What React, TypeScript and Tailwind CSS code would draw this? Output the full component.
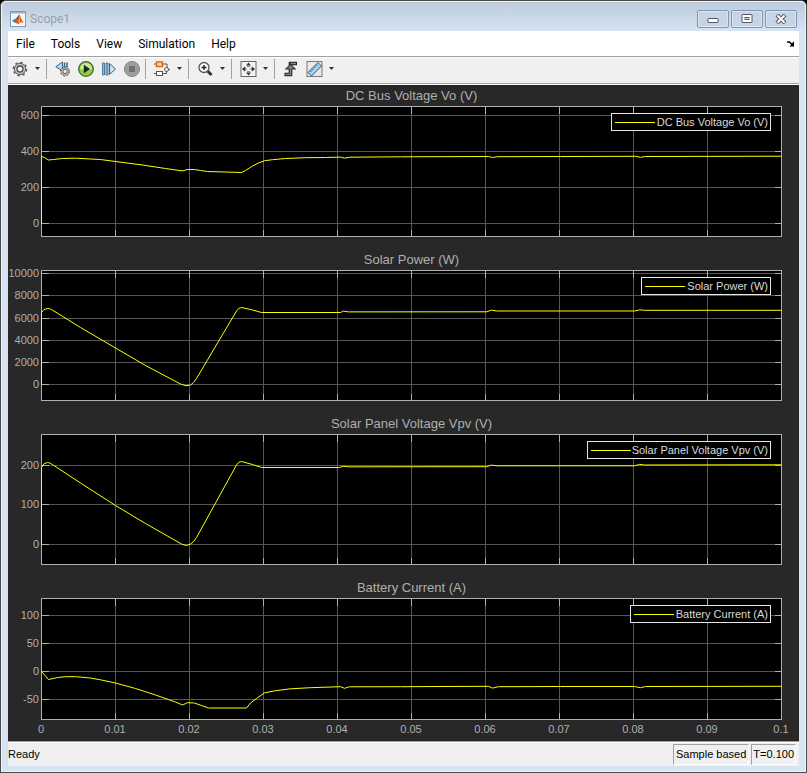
import type { ReactNode } from "react";

type Tick = { label: string; y: number };

type PlotData = {
  title: string;
  top: number;
  bottom: number;
  ticks: Tick[];
  legendX: number;
  path: string;
};

const X_LABELS = ["0", "0.01", "0.02", "0.03", "0.04", "0.05", "0.06", "0.07", "0.08", "0.09", "0.1"];

const LEFT = 41;
const STEP = 74;
const RIGHT = LEFT + STEP * 10;

const plots: PlotData[] = [
  {
    title: "DC Bus Voltage Vo (V)",
    top: 106,
    bottom: 236,
    legendX: 611,
    ticks: [
      { label: "600", y: 115 },
      { label: "400", y: 151 },
      { label: "200", y: 187 },
      { label: "0", y: 223 },
    ],
    path: "M41 223 V156 L44 157 L48 159.5 L53 159 L62 158 L75 157.7 L90 158.5 L100 159 L115 161 L142 164.5 L165 168 L182 170.4 L187 169 L194 169 L200 170 L207 171 L225 171.5 L241 172 L245 170 L252 165.5 L258 162.5 L264 160.2 L272 159.2 L285 158 L305 157.2 L325 157 L340 156.6 L344 157.6 L349 156.7 L400 156.3 L488 156 L492 157 L497 156.2 L560 156 L635 155.8 L640 156.8 L645 156 L781 155.7",
  },
  {
    title: "Solar Power (W)",
    top: 270,
    bottom: 400,
    legendX: 641,
    ticks: [
      { label: "10000", y: 273 },
      { label: "8000", y: 295 },
      { label: "6000", y: 318 },
      { label: "4000", y: 340 },
      { label: "2000", y: 362 },
      { label: "0", y: 384 },
    ],
    path: "M41 384 V312 Q43 308 47 308 Q49 308 51 309 L80 327 L115 347.5 L145 365 L180 383.5 Q186 386.5 190 384.5 Q193 383 196 378 L236 310.5 Q238 307 241 307 L252 309.5 L261 312 L340 312 L343 310.6 L348 311.4 L486 311.3 L491 309.7 L496 310.5 L634 310.5 L639 309.3 L644 309.8 L781 309.8",
  },
  {
    title: "Solar Panel Voltage Vpv (V)",
    top: 434,
    bottom: 564,
    legendX: 587,
    ticks: [
      { label: "200", y: 465 },
      { label: "100", y: 504 },
      { label: "0", y: 544 },
    ],
    path: "M41 544 V467 Q43 462 47 462 Q49 462 51 463.5 L80 482.5 L115 505 L145 523 L181 543.5 Q186 546.5 190 543.5 Q193 542 196 537 L236 464.5 Q238 461 241 461 L252 464 L261 467 L339 467 L343 465.7 L348 466.3 L486 466.2 L491 464.6 L496 465.3 L634 465.3 L639 463.9 L644 464.5 L781 464.3",
  },
  {
    title: "Battery Current (A)",
    top: 598,
    bottom: 719,
    legendX: 630,
    ticks: [
      { label: "100", y: 615 },
      { label: "50", y: 643 },
      { label: "0", y: 671 },
      { label: "-50", y: 699 },
    ],
    path: "M41 671 L48 679 L57 677 L65 676.2 L75 676.2 L90 677.5 L100 679.3 L115 682.5 L135 688 L155 694.5 L175 701.5 L182 704.5 L187 702.2 L194 702.5 L201 705 L208 707.5 L246 707.5 L250 702.5 L256 698 L264 692.4 L275 690.2 L290 688.3 L310 687.2 L340 686.2 L344 687.8 L349 686.3 L400 686.2 L488 685.8 L492 687.6 L498 686.2 L560 686 L634 686 L640 687.2 L645 686 L781 685.8",
  },
];

function Plot({ plot, showTime }: { plot: PlotData; showTime: boolean }) {
  const { title, top, bottom, ticks, legendX, path } = plot;
  const columns = X_LABELS.map((_, i) => LEFT + STEP * i);

  return (
    <section>
      <h2 className="h-[21px] pl-4 text-center text-[13px] leading-[22px] text-[#afafaf]">{title}</h2>
      <svg viewBox={`8 ${top} 791 143`} className="block w-full overflow-visible" role="img" aria-label={title}>
        <rect x={LEFT} y={top} width={RIGHT - LEFT} height={bottom - top} fill="#000" />
        <g shapeRendering="crispEdges" strokeWidth="1" fill="none" transform="translate(0.5 0.5)">
          <g stroke="#575757">
            {ticks.map((t) => (
              <path key={t.y} d={`M${LEFT} ${t.y}H${RIGHT}`} />
            ))}
            {columns.slice(1, -1).map((x) => (
              <path key={x} d={`M${x} ${top}V${bottom}`} />
            ))}
          </g>
          <g stroke="#afafaf">
            {ticks.map((t) => (
              <path key={t.y} d={`M${LEFT} ${t.y}h7M${RIGHT} ${t.y}h-7`} />
            ))}
            {columns.map((x) => (
              <path key={x} d={`M${x} ${top}v7M${x} ${bottom}v-7`} />
            ))}
            <rect x={LEFT} y={top} width={RIGHT - LEFT} height={bottom - top} />
          </g>
        </g>
        <path d={path} fill="none" stroke="#ffff00" strokeWidth="1" transform="translate(0.5 0.5)" />
        <g fontSize="11" fill="#afafaf">
          {ticks.map((t) => (
            <text key={t.y} x="39" y={t.y + 4} textAnchor="end">
              {t.label}
            </text>
          ))}
          {showTime &&
            X_LABELS.map((label, i) => (
              <text key={label} x={LEFT + STEP * i} y="733" textAnchor="middle">
                {label}
              </text>
            ))}
        </g>
        <rect x={legendX + 0.5} y={top + 7.5} width={770 - legendX} height="17" fill="#000" stroke="#e6e6e6" />
        <path d={`M${legendX + 4} ${top + 16.5}h40`} stroke="#ffff00" />
        <text x="768" y={top + 20} textAnchor="end" fontSize="11" fill="#d9d9d9">
          {title}
        </text>
      </svg>
    </section>
  );
}

function ToolButton({ label, children }: { label: string; children: ReactNode }) {
  return (
    <button type="button" aria-label={label} className="size-4 shrink-0">
      <svg viewBox="0 0 16 16" className="block size-4 overflow-visible" fill="none">
        {children}
      </svg>
    </button>
  );
}

function Caret({ label }: { label: string }) {
  return (
    <button type="button" aria-label={label} className="-ml-0.5 flex h-4 w-2 shrink-0 items-center justify-center">
      <svg viewBox="0 0 5 3" className="block h-[3px] w-[5px]">
        <path d="M0 0h5L2.5 3z" fill="#333" />
      </svg>
    </button>
  );
}

function Separator() {
  return <div className="mr-px -ml-0.5 h-5 w-px shrink-0 bg-[#a0a0a0]" />;
}

function Gear({ x, y, scale }: { x: number; y: number; scale: number }) {
  return (
    <g transform={`translate(${x} ${y}) scale(${scale})`}>
      <circle r="6.6" stroke="#5c5c5c" strokeWidth="1.4" strokeDasharray="2.6 2.58" />
      <circle r="5.6" fill="#c9c9c9" stroke="#5c5c5c" strokeWidth="1" />
      <circle r="3" fill="#f5f5f5" stroke="#4a4a4a" strokeWidth="1.3" />
    </g>
  );
}

function Toolbar() {
  return (
    <div className="flex h-[27px] items-center gap-[7px] border-y border-t-white border-b-[#a0a0a0] bg-[#f0f0f0] pr-2 pb-1 pl-1">
      <ToolButton label="Configuration properties">
        <Gear x={8} y={8} scale={1} />
      </ToolButton>
      <Caret label="Configuration options" />
      <Separator />
      <ToolButton label="Step back">
        <path d="M7.5 1v9L.8 5.7z" fill="#b9d9f0" stroke="#37648c" />
        <path d="M9.5 1.5v6M12 1.5v5" stroke="#37648c" strokeWidth="1.5" />
        <Gear x={10} y={10.5} scale={0.7} />
      </ToolButton>
      <ToolButton label="Run">
        <circle cx="8" cy="8" r="7.3" fill="#8fca45" stroke="#44692a" strokeWidth="1.3" />
        <path d="M2 8a6 6 0 0 1 12 0Q8 10 2 8z" fill="#c8eb91" />
        <path d="M5.8 3.8 12 8l-6.2 4.2z" fill="#222" />
      </ToolButton>
      <ToolButton label="Step forward">
        <path d="M1.5 2h2v12h-2zM5 2h2v12H5z" fill="#8fb9d8" stroke="#37648c" strokeWidth="0.8" />
        <path d="M8.500 2.500v11L14.500 8z" fill="#c6e2f5" stroke="#37648c" />
      </ToolButton>
      <ToolButton label="Stop">
        <circle cx="8" cy="8" r="7.6" fill="#9d9d9d" stroke="#8b8b8b" />
        <rect x="5" y="5" width="6" height="6" fill="#707070" />
      </ToolButton>
      <Separator />
      <ToolButton label="Highlight block">
        <path d="M0 3h2M9 3h4v4M0 12.5h2M9 12.5h3.5V10" stroke="#555" />
        <rect x="2.5" y="1" width="6" height="4.5" fill="#ffd2a0" stroke="#df5c10" strokeWidth="1.4" />
        <rect x="2.5" y="10.5" width="6" height="4" fill="#fafafa" stroke="#555" />
        <circle cx="12.5" cy="8.5" r="2" fill="#fafafa" stroke="#555" />
        <path d="M14.5 8.5H16" stroke="#555" />
      </ToolButton>
      <Caret label="Highlight options" />
      <Separator />
      <ToolButton label="Zoom">
        <circle cx="7" cy="6.5" r="5" fill="#fafdff" stroke="#555" strokeWidth="1.3" />
        <path d="M7 4v5M4.5 6.5h5" stroke="#222" strokeWidth="1.4" />
        <path d="m10.8 10.3 3.7 3.7" stroke="#333" strokeWidth="3" />
      </ToolButton>
      <Caret label="Zoom options" />
      <Separator />
      <ToolButton label="Scale axes">
        <rect x="1" y=".5" width="15" height="15" fill="#f4f4f4" stroke="#666" />
        <path d="M8.500 1.500 11 4.500H6zM8.500 14.500l2.500-3H6zM2 8l3-2.500v5zM15 8l-3-2.500v5z" fill="#333" />
        <path d="M7 4.500h3v1.500H7zM7 10h3v1.500H7zM5 6.500h1.500v3H5zM10.500 6.500H12v3h-1.500z" fill="#8a8a8a" />
      </ToolButton>
      <Caret label="Scale options" />
      <Separator />
      <ToolButton label="Triggers">
        <path d="M1.500 13.500H7.500V2.500H14" stroke="#222" strokeWidth="3.600" />
        <path d="M2.500 8h10l-5-4.500z" fill="#777" stroke="#222" />
        <path d="M2.500 13.500h5V6M7.500 2.500h5.500" stroke="#858585" strokeWidth="1.600" />
      </ToolButton>
      <ToolButton label="Measurements">
        <rect x="1" y=".5" width="15" height="15" fill="#e9e9e9" stroke="#777" />
        <path d="m2 11.5 10-10 3.5 3.5-10 10z" fill="#a6d2ef" stroke="#2d5878" />
        <path d="m4 9.5 1.5 1.5M6 7.5 7.5 9M8 5.5 9.5 7M10 3.5 11.5 5" stroke="#2d5878" />
      </ToolButton>
      <Caret label="Measurement options" />
    </div>
  );
}

function WindowButton({ label, children }: { label: string; children: ReactNode }) {
  return (
    <button
      type="button"
      aria-label={label}
      className="flex h-[18px] w-8 items-center justify-center rounded-xs border border-[#8494b0] bg-[#c6d4e4] shadow-[inset_0_0_0_1px_#dce6f1]"
    >
      <svg viewBox="0 0 12 10" className="h-2.5 w-3" fill="none">
        {children}
      </svg>
    </button>
  );
}

function TitleBar() {
  return (
    <header className="flex h-[29px] items-start justify-between pr-0.5 pl-0.5">
      <div className="flex items-center gap-1 pt-[9px]">
        <svg viewBox="0 0 16 16" className="size-4">
          <rect x=".5" y=".5" width="15" height="15" fill="#f8f8f8" stroke="#8499af" />
          <path d="M1 1h14v1.5H1z" fill="#9fb4ca" />
          <path d="M2 9.5 6 7.5l2 2-3 2.5z" fill="#3c82b5" />
          <path d="M6 7.5 9.3 3.5 8 9.5z" fill="#254a6b" />
          <path d="M9.5 3.5 5 12q2-.5 3.5 1.5Q10 10 13.5 12q-2-3-4-8.5z" fill="#df541c" />
          <path d="M9.5 4 8 13q1.5-2.500 2.500-2.500z" fill="#f7a13c" />
        </svg>
        <h1 className="font-[Roboto,sans-serif] text-[12px] leading-4 text-[#98a0a8]">Scope1</h1>
      </div>
      <div className="flex gap-0.5 pt-2">
        <WindowButton label="Minimize">
          <rect x="1" y="4.5" width="10" height="4" rx=".5" fill="#fff" stroke="#535666" />
        </WindowButton>
        <WindowButton label="Maximize">
          <rect x="1" y=".5" width="10" height="8" rx=".5" fill="#fff" stroke="#535666" />
          <rect x="4" y="3.5" width="4" height="2" fill="#c6d4e4" stroke="#535666" />
        </WindowButton>
        <WindowButton label="Close">
          <path d="m2 1 8 8M10 1 2 9" stroke="#535666" strokeWidth="4" />
          <path d="m2.5 1.5 7 7M9.5 1.5l-7 7" stroke="#fff" strokeWidth="2" />
        </WindowButton>
      </div>
    </header>
  );
}

function MenuBar() {
  return (
    <nav className="flex h-[26px] items-center gap-4 border-b border-[#a0a0a0] bg-white pr-1 pl-2 font-[Roboto,sans-serif] text-[12px] text-black">
      {["File", "Tools", "View", "Simulation", "Help"].map((item) => (
        <button key={item} type="button">
          {item}
        </button>
      ))}
      <button type="button" aria-label="Dock window" className="ml-auto">
        <svg viewBox="0 0 8 6" className="h-1.5 w-2" fill="none">
          <path d="M0 1h2.5L6 4.5" stroke="#000" strokeWidth="1.5" />
          <path d="M7 0v5.5H2.5z" fill="#000" />
        </svg>
      </button>
    </nav>
  );
}

export default function App() {
  return (
    <div className="bg-black font-['Liberation_Sans',Arial,sans-serif]">
      <div className="rounded-t-md border border-[#4a4a4a] bg-[#d7e4f2]">
        <div className="rounded-t-md border border-[#edf3f9] bg-linear-to-b from-[#bccbdc] to-[#d7e4f2] to-[30px] px-1.5 pb-[5px]">
          <TitleBar />
          <MenuBar />
          <Toolbar />
          <main className="border-y border-t-white border-b-[#a0a0a0] bg-[#282828]">
            {plots.map((plot, i) => (
              <Plot key={plot.title} plot={plot} showTime={i === plots.length - 1} />
            ))}
          </main>
          <footer className="flex h-6 items-center justify-between border-t border-white bg-[#f0f0f0] pr-[3px] text-[11px] text-black">
            <span>Ready</span>
            <div className="flex gap-0.5">
              <span className="border border-[#a0a0a0] border-r-white border-b-white py-px pr-0.5 pl-0.5">Sample based</span>
              <span className="border border-[#a0a0a0] border-r-white border-b-white px-px py-px">T=0.100</span>
            </div>
          </footer>
        </div>
      </div>
    </div>
  );
}
